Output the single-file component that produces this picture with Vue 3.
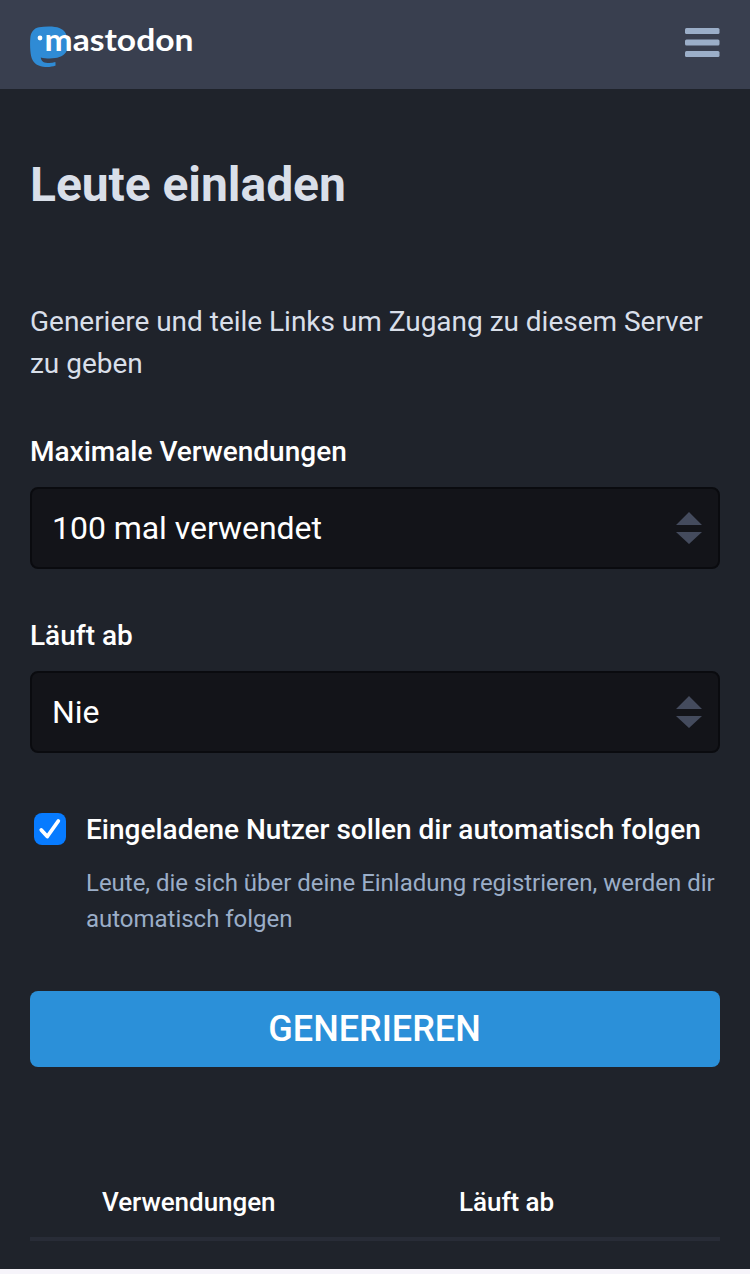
<script setup>
const fields = [
  { label: 'Maximale Verwendungen', value: '100 mal verwendet' },
  { label: 'Läuft ab', value: 'Nie' },
]
</script>

<template>
  <div class="page">
    <header class="header">
      <svg class="logo" width="180" height="59" viewBox="0 -10 180 59" role="img" aria-label="mastodon">
        <path
          fill="#2f8bd5"
          d="M37 12.5C36.3 6 31 2.5 25 1.9 20 1.4 14 1.5 9 2.3 3.5 3.3.8 7.500.3 13-.2 19 .1 26 1.100 31 2.400 37.500 7 40.800 13 41.800c4.500.7 9 .2 12.600-1.200l-.2-3.500c-4.200 1.300-9.200 1.300-12.100-.2-1.600-.9-2.400-2.500-2.500-4.400 4.200 1 9.600 1.300 14.200.6 6.200-.9 11.200-3.900 11.900-8.600.5-4 .5-8.500.1-12Z"
        />
        <circle cx="10" cy="13" r="2.400" fill="#fff" />
        <text class="wordmark" x="14.500" y="26" textLength="149" lengthAdjust="spacingAndGlyphs">mastodon</text>
      </svg>
      <svg class="menu" width="36" height="30" viewBox="0 0 36 30" fill="#9baec8">
        <rect width="34.500" height="6" rx="1.500" />
        <rect y="11.500" width="34.500" height="6" rx="1.500" />
        <rect y="23" width="34.500" height="6" rx="1.500" />
      </svg>
    </header>
    <main class="content">
      <h1>Leute einladen</h1>
      <p class="intro">Generiere und teile Links um Zugang zu diesem Server<br />zu geben</p>
      <div v-for="field in fields" :key="field.label" class="field">
        <div class="label">{{ field.label }}</div>
        <div class="select">
          <span>{{ field.value }}</span>
          <svg width="26" height="32" viewBox="0 0 26 32" fill="#444b5d">
            <path d="M0 13 13 0 26 13ZM0 20H26L13 32Z" />
          </svg>
        </div>
      </div>
      <div class="check">
        <svg class="box" width="32" height="32" viewBox="0 0 32 32">
          <rect width="32" height="32" rx="8" fill="#077bff" />
          <path d="M7.300 17 13.300 23.500 24.300 8" fill="none" stroke="#fff" stroke-width="3.800" stroke-linecap="round" stroke-linejoin="round" />
        </svg>
        <div>
          <div class="label">Eingeladene Nutzer sollen dir automatisch folgen</div>
          <p class="hint">Leute, die sich über deine Einladung registrieren, werden dir<br />automatisch folgen</p>
        </div>
      </div>
      <button class="submit" type="button">GENERIEREN</button>
      <div class="table-head">
        <span>Verwendungen</span>
        <span>Läuft ab</span>
      </div>
    </main>
  </div>
</template>

<style>
body {
  background: #f6f4fa;
}
</style>

<style scoped>
.page {
  box-sizing: border-box;
  height: 1269px;
  background: #1f232b;
  color: #fff;
  font-family: Roboto, "Liberation Sans", sans-serif;
}
.header {
  display: flex;
  justify-content: space-between;
  align-items: flex-start;
  box-sizing: border-box;
  height: 89px;
  padding: 15px 29px 0 30px;
  background: #393f4f;
}
.logo,
.menu {
  display: block;
}
.menu {
  margin-top: 13px;
}
.wordmark {
  fill: #fff;
  font: 700 31px Lato, sans-serif;
}
.content {
  padding: 68px 30px 0;
}
h1 {
  margin: 0 0 88px;
  color: #d9dfe9;
  font-size: 48px;
  font-weight: 700;
  letter-spacing: -0.06px;
  line-height: 56px;
}
.intro {
  margin: 0 0 45px;
  color: #d9dfe9;
  font-size: 28px;
  letter-spacing: -0.02px;
  line-height: 42px;
  white-space: nowrap;
}
.field {
  margin-bottom: 45px;
}
.label {
  font-size: 28px;
  font-weight: 500;
  line-height: 43px;
  white-space: nowrap;
}
.select {
  display: flex;
  justify-content: space-between;
  align-items: center;
  box-sizing: border-box;
  height: 82px;
  margin-top: 14px;
  padding: 0 16px 0 20px;
  border: 2px solid #0a0b0f;
  border-radius: 8px;
  background: #131419;
  font-size: 32px;
  letter-spacing: -0.04px;
}
.check {
  display: flex;
  gap: 20px;
  margin-top: 55px;
  padding-left: 4px;
}
.box {
  flex: none;
  margin-top: 5px;
}
.hint {
  margin: 14px 0 0;
  color: #9baec8;
  font-size: 24px;
  letter-spacing: -0.02px;
  line-height: 36px;
  white-space: nowrap;
}
.submit {
  display: block;
  width: 100%;
  height: 76px;
  margin-top: 54px;
  padding: 0 1px 0 0;
  border: 0;
  border-radius: 8px;
  background: #2b90d9;
  color: #fff;
  font: 500 36px Roboto, sans-serif;
}
.table-head {
  display: grid;
  grid-template-columns: 357px 1fr;
  margin-top: 115px;
  padding: 0 0 15px 72px;
  border-bottom: 4px solid #282c37;
  font-size: 26px;
  font-weight: 500;
  letter-spacing: -0.04px;
  line-height: 40px;
}
</style>
